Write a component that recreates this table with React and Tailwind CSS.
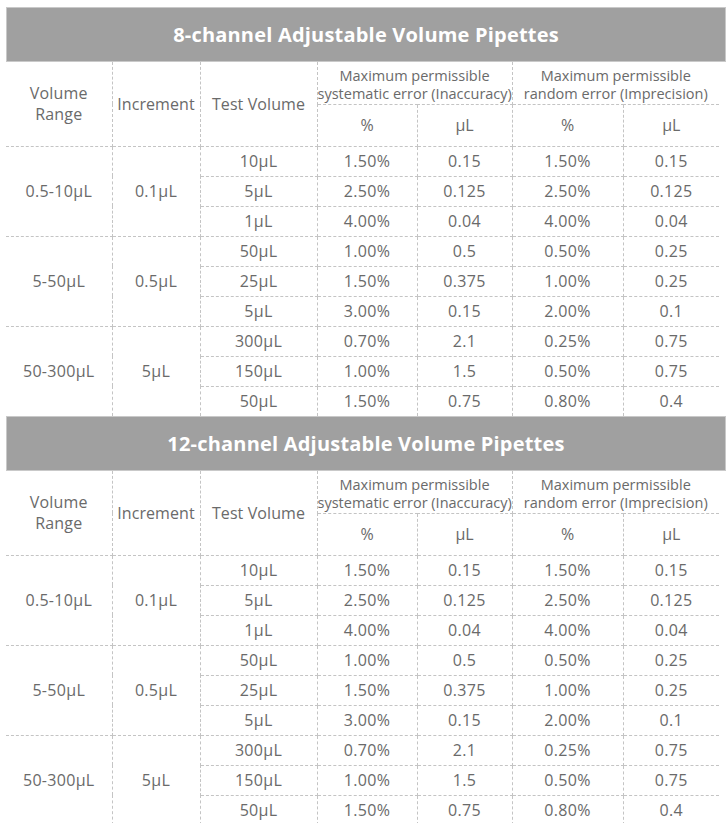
import React from "react";

const groups = [
  {
    range: "0.5-10μL",
    inc: "0.1μL",
    rows: [
      ["10μL", "1.50%", "0.15", "1.50%", "0.15"],
      ["5μL", "2.50%", "0.125", "2.50%", "0.125"],
      ["1μL", "4.00%", "0.04", "4.00%", "0.04"],
    ],
  },
  {
    range: "5-50μL",
    inc: "0.5μL",
    rows: [
      ["50μL", "1.00%", "0.5", "0.50%", "0.25"],
      ["25μL", "1.50%", "0.375", "1.00%", "0.25"],
      ["5μL", "3.00%", "0.15", "2.00%", "0.1"],
    ],
  },
  {
    range: "50-300μL",
    inc: "5μL",
    rows: [
      ["300μL", "0.70%", "2.1", "0.25%", "0.75"],
      ["150μL", "1.00%", "1.5", "0.50%", "0.75"],
      ["50μL", "1.50%", "0.75", "0.80%", "0.4"],
    ],
  },
];

const cell = "border border-dashed border-[#c4c4c4] text-center align-middle p-0";

function PipetteTable({ title }) {
  return (
    <div>
      <div className="h-[55px] bg-[#a0a0a0] border border-[#c9c9c9] flex items-center justify-center">
        <span className="text-white font-bold text-[20px] tracking-[0.2px]">{title}</span>
      </div>
      <table className="w-[713px] table-fixed border-collapse border-hidden text-[#6a6a6a]">
        <colgroup>
          <col className="w-[106px]" />
          <col className="w-[88px]" />
          <col className="w-[117px]" />
          <col className="w-[100px]" />
          <col className="w-[95px]" />
          <col className="w-[111px]" />
          <col className="w-[96px]" />
        </colgroup>
        <thead>
          <tr className="h-[42px] text-[14.5px] leading-[18px]">
            <td rowSpan={2} className={`${cell} text-[16px] leading-[21px] tracking-[0.2px]`}>
              Volume
              <br />
              Range
            </td>
            <td rowSpan={2} className={`${cell} text-[16px] tracking-[0.1px]`}>Increment</td>
            <td rowSpan={2} className={`${cell} text-[16px] tracking-[0.1px]`}>Test Volume</td>
            <td colSpan={2} className={`${cell} pt-1`}>
              Maximum permissible
              <br />
              <span className="whitespace-nowrap">systematic error (Inaccuracy)</span>
            </td>
            <td colSpan={2} className={`${cell} pt-1`}>
              Maximum permissible
              <br />
              <span className="whitespace-nowrap">random error (Imprecision)</span>
            </td>
          </tr>
          <tr className="h-[42px] text-[16px]">
            <td className={cell}>%</td>
            <td className={cell}>μL</td>
            <td className={cell}>%</td>
            <td className={cell}>μL</td>
          </tr>
        </thead>
        <tbody className="text-[16px] tracking-[0.3px]">
          {groups.map((g) =>
            g.rows.map((r, i) => (
              <tr key={g.range + i} className="h-[30px]">
                {i === 0 && (
                  <>
                    <td rowSpan={3} className={cell}>{g.range}</td>
                    <td rowSpan={3} className={cell}>{g.inc}</td>
                  </>
                )}
                {r.map((v, j) => (
                  <td key={j} className={cell}>{v}</td>
                ))}
              </tr>
            ))
          )}
        </tbody>
      </table>
    </div>
  );
}

export default function App() {
  return (
    <div
      className="bg-white w-[726px] h-[823px] overflow-hidden pt-[7px] pl-[6px]"
      style={{ fontFamily: '"Open Sans", "Noto Sans", sans-serif' }}
    >
      <PipetteTable title="8-channel Adjustable Volume Pipettes" />
      <PipetteTable title="12-channel Adjustable Volume Pipettes" />
    </div>
  );
}
